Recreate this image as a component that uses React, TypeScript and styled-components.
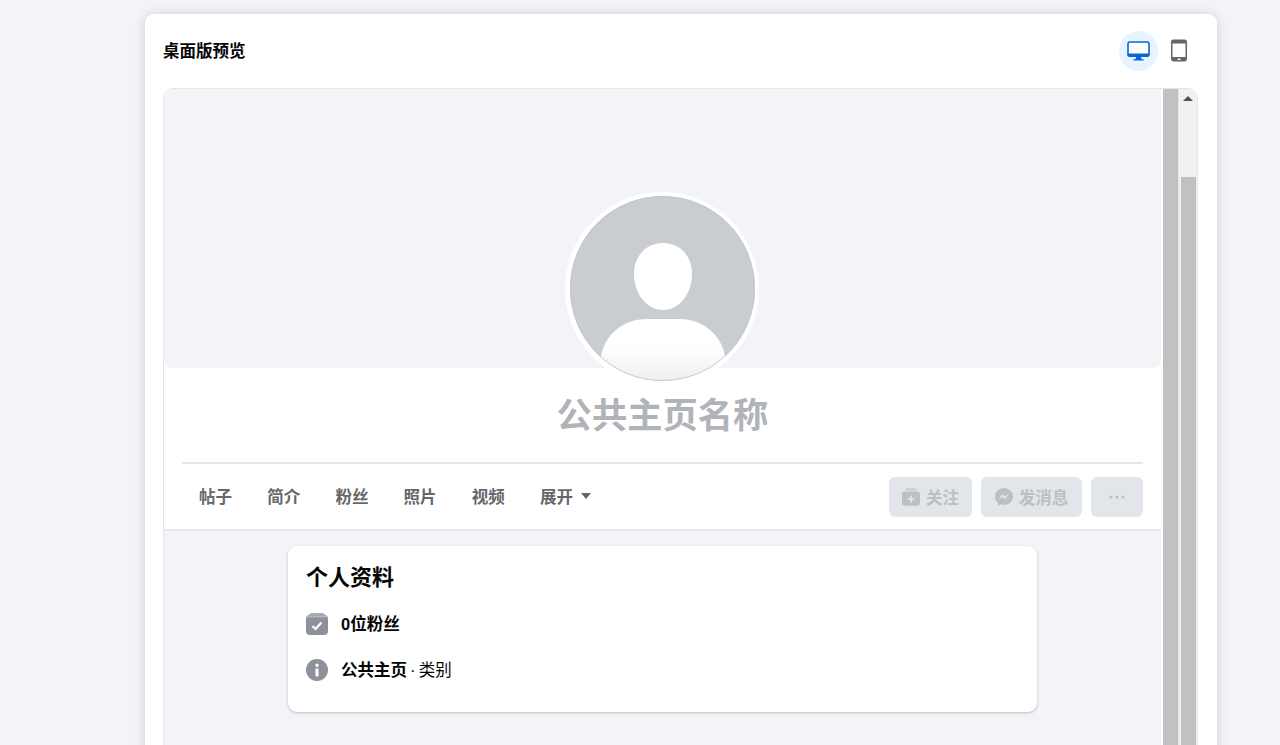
import React from "react";
import styled, { createGlobalStyle } from "styled-components";

const Global = createGlobalStyle`
  html, body { margin: 0; padding: 0; height: 745px; overflow: hidden; background: #f2f4f8; }
  #root { height: 745px; overflow: hidden; }
  * { box-sizing: border-box; }
  body { font-family: "Liberation Sans", "Noto Sans CJK SC", sans-serif; }
`;

const Page = styled.div`
  height: 745px;
  overflow: hidden;
  padding: 14px 63px 0 145px;
  background: #f2f4f8;
`;

const Card = styled.section`
  height: 800px;
  background: #fff;
  border-radius: 9px;
  box-shadow: 0 1px 12px rgba(0, 0, 0, 0.16);
  padding: 0 19px 0 18px;
`;

const Header = styled.header`
  height: 74px;
  display: flex;
  align-items: center;
  justify-content: space-between;
  padding: 0 0 1px 0;
`;

const Title = styled.h1`
  margin: 0 0 2px;
  font-size: 16.5px;
  font-weight: 700;
  color: #050505;
`;

const Toggle = styled.div`
  display: flex;
  align-items: center;
  gap: 1px;
`;

const ToggleButton = styled.div<{ $active?: boolean }>`
  width: 39px;
  height: 40px;
  border-radius: 50%;
  display: flex;
  align-items: center;
  justify-content: center;
  background: ${(p) => (p.$active ? "#e7f3ff" : "transparent")};
`;

const Frame = styled.div`
  height: 720px;
  display: flex;
  background: #fff;
  border: 1px solid #e4e6eb;
  border-radius: 10px;
  overflow: hidden;
`;

const Preview = styled.div`
  width: 997px;
  flex: none;
  height: 100%;
  background: #f2f4f8;
`;

const TopSection = styled.div`
  background: #fff;
`;

const Cover = styled.div`
  height: 279px;
  background: #f2f4f8;
  border-radius: 0 0 8px 8px;
`;

const ProfileHead = styled.div`
  border-bottom: 2px solid #e4e6eb;
  padding: 0 18px;
  height: 163px;
  display: flex;
  flex-direction: column;
  align-items: center;
`;

const AvatarRing = styled.div`
  margin: -176px 1px 0 0;
  width: 194px;
  height: 194px;
  flex: none;
  border-radius: 50%;
  background: #fff;
  padding: 4px 5px 5px 5px;
  position: relative;
`;

const Name = styled.h2`
  margin: 3px 0 0;
  height: 53px;
  line-height: 53px;
  font-size: 35.3px;
  font-weight: 700;
  color: #b0b3b8;
`;

const TabBar = styled.div`
  width: 100%;
  margin-top: 20px;
  border-top: 2px solid #e4e6eb;
  flex: 1;
  display: flex;
  align-items: center;
  justify-content: space-between;
  padding-left: 17px;
`;

const Tabs = styled.nav`
  display: flex;
  align-items: center;
  gap: 35.2px;
  margin-bottom: 2px;
`;

const Tab = styled.span`
  display: inline-flex;
  align-items: center;
  gap: 8px;
  font-size: 16.5px;
  font-weight: 700;
  color: #65676b;
`;

const Caret = styled.i`
  width: 0;
  height: 0;
  border-left: 5px solid transparent;
  border-right: 5px solid transparent;
  border-top: 6px solid #65676b;
  margin-top: 1px;
`;

const Actions = styled.div`
  display: flex;
  gap: 9px;
`;

const ActionButton = styled.div<{ $w: number }>`
  width: ${(p) => p.$w}px;
  height: 40px;
  border-radius: 6px;
  background: #e2e5e9;
  color: #bcc0c4;
  font-size: 16.5px;
  font-weight: 700;
  display: flex;
  align-items: center;
  justify-content: center;
  gap: 6px;
`;

const InfoCard = styled.div`
  width: 749px;
  height: 166px;
  margin: 15px 0 0 124px;
  background: #fff;
  border-radius: 9px;
  box-shadow: 0 1px 3px rgba(0, 0, 0, 0.22);
  padding: 16px 18px;
`;

const InfoTitle = styled.h3`
  margin: 0 0 18px;
  font-size: 22px;
  line-height: 32px;
  font-weight: 700;
  color: #050505;
`;

const InfoRow = styled.div`
  height: 22px;
  display: flex;
  align-items: center;
  gap: 13px;
  margin-bottom: 24px;
  font-size: 16.5px;
  color: #050505;
`;

const IconSlot = styled.span`
  display: flex;
  flex: none;
  margin-top: 2px;
`;

const Strong = styled.strong`
  font-weight: 700;
`;

const Rest = styled.span`
  font-weight: 400;
  word-spacing: -1.5px;
`;

const InnerBar = styled.div`
  flex: none;
  width: 15px;
  margin-left: 2px;
  height: 100%;
  background: #c1c1c1;
`;

const OuterBar = styled.div`
  flex: none;
  flex-grow: 1;
  height: 100%;
  background: #f1f1f1;
  border-left: 1px solid #e6e6e6;
  display: flex;
  flex-direction: column;
  align-items: flex-end;
`;

const ArrowSlot = styled.div`
  width: 100%;
  height: 88px;
  display: flex;
  justify-content: center;
  padding: 7px 1px 0 0;
`;

const UpArrow = styled.i`
  width: 0;
  height: 0;
  border-left: 5px solid transparent;
  border-right: 5px solid transparent;
  border-bottom: 5px solid #505050;
`;

const Thumb = styled.div`
  width: 15px;
  margin-right: 1px;
  flex: 1;
  background: #c1c1c1;
`;

const Monitor = () => (
  <svg width="23" height="20" viewBox="0 0 23 20">
    <rect x="1" y="1" width="21" height="14" rx="2" fill="#fff" stroke="#0866d9" strokeWidth="1.6" />
    <path d="M0.5 12.5h22v1.2a2.3 2.3 0 0 1-2.3 2.3H2.8a2.3 2.3 0 0 1-2.3-2.3z" fill="#0866d9" />
    <path d="M9 16h5l.6 2.2h2v1.2H6.4v-1.2h2z" fill="#0866d9" />
  </svg>
);

const Phone = () => (
  <svg width="16" height="23" viewBox="0 0 16 23">
    <rect x="0" y="0.5" width="16" height="22" rx="2.4" fill="#65676b" />
    <rect x="1.5" y="4.5" width="13" height="13.5" fill="#fff" />
    <rect x="6.5" y="19.4" width="3" height="1.6" rx="0.5" fill="#fff" />
  </svg>
);

const Silhouette = () => (
  <svg width="185" height="185" viewBox="0 0 185 185">
    <defs>
      <linearGradient id="body" x1="0" y1="0" x2="0" y2="1">
        <stop offset="0.45" stopColor="#ffffff" />
        <stop offset="1" stopColor="#eeeff1" />
      </linearGradient>
      <clipPath id="disc">
        <circle cx="92.5" cy="92.5" r="92.5" />
      </clipPath>
    </defs>
    <circle cx="92.5" cy="92.5" r="92.5" fill="#c9ccd1" />
    <g clipPath="url(#disc)">
      <path d="M93 47c17 0 29 13 29 31 0 20-13 36-29 36s-29-16-29-36c0-18 12-31 29-31z" fill="#fff" />
      <path d="M30 185v-15c0-29 22-47 47-47h32c25 0 47 18 47 47v15z" fill="url(#body)" />
    </g>
    <circle cx="92.5" cy="92.5" r="92" fill="none" stroke="#c2c5ca" strokeWidth="0.8" />
  </svg>
);

const FollowIcon = () => (
  <svg width="18" height="18" viewBox="0 0 18 18">
    <path d="M3.5 1.2c0-.6.5-1 1-1h9c.5 0 1 .4 1 1v1.3h-11z" fill="#c8cbd0" />
    <rect x="0" y="3.6" width="18" height="14.2" rx="3" fill="#bcc0c4" />
    <path d="M9 7.5v7M5.6 11h6.8" stroke="#e4e6eb" strokeWidth="1.7" />
  </svg>
);

const MessengerIcon = () => (
  <svg width="18" height="18" viewBox="0 0 18 18">
    <path d="M9 0C4 0 0 3.7 0 8.6c0 2.6 1.1 4.8 2.9 6.3v3l2.9-1.6c1 .3 2.1.5 3.2.5 5 0 9-3.7 9-8.4S14 0 9 0z" fill="#bcc0c4" />
    <path d="M3.6 11.2 7 6.3l2.7 2.2 3.9-2.2-3.4 4.9-2.7-2.2z" fill="#e4e6eb" />
  </svg>
);

const Dots = () => (
  <svg width="16" height="4" viewBox="0 0 16 4">
    <circle cx="2" cy="2" r="1.6" fill="#bcc0c4" />
    <circle cx="8" cy="2" r="1.6" fill="#bcc0c4" />
    <circle cx="14" cy="2" r="1.6" fill="#bcc0c4" />
  </svg>
);

const FansIcon = () => (
  <svg width="22" height="22" viewBox="0 0 22 22">
    <path d="M2.5 4C2.500 1.500 4 0 6 0h10c2 0 3.500 1.500 3.500 4z" fill="#a9adb6" />
    <rect x="0" y="2" width="22" height="20" rx="4" fill="#8c919c" />
    <rect x="1" y="2.500" width="20" height="2" rx="1" fill="#b4b8c0" />
    <path d="M6.500 13l3 3 6-6.500" fill="none" stroke="#fff" strokeWidth="2.200" />
  </svg>
);

const InfoIcon = () => (
  <svg width="22" height="22" viewBox="0 0 22 22">
    <circle cx="11" cy="11" r="11" fill="#8c919c" />
    <circle cx="11" cy="6.300" r="1.700" fill="#fff" />
    <rect x="9.500" y="9.500" width="3" height="8" rx="0.700" fill="#fff" />
  </svg>
);

export default function App() {
  return (
    <Page>
      <Global />
      <Card>
        <Header>
          <Title>桌面版预览</Title>
          <Toggle>
            <ToggleButton $active>
              <Monitor />
            </ToggleButton>
            <ToggleButton>
              <Phone />
            </ToggleButton>
          </Toggle>
        </Header>
        <Frame>
          <Preview>
            <TopSection>
              <Cover />
              <ProfileHead>
                <AvatarRing>
                  <Silhouette />
                </AvatarRing>
                <Name>公共主页名称</Name>
                <TabBar>
                  <Tabs>
                    <Tab>帖子</Tab>
                    <Tab>简介</Tab>
                    <Tab>粉丝</Tab>
                    <Tab>照片</Tab>
                    <Tab>视频</Tab>
                    <Tab>
                      展开
                      <Caret />
                    </Tab>
                  </Tabs>
                  <Actions>
                    <ActionButton $w={83}>
                      <FollowIcon />
                      关注
                    </ActionButton>
                    <ActionButton $w={101}>
                      <MessengerIcon />
                      发消息
                    </ActionButton>
                    <ActionButton $w={52}>
                      <Dots />
                    </ActionButton>
                  </Actions>
                </TabBar>
              </ProfileHead>
            </TopSection>
            <InfoCard>
              <InfoTitle>个人资料</InfoTitle>
              <InfoRow>
                <IconSlot>
                  <FansIcon />
                </IconSlot>
                <Strong>0位粉丝</Strong>
              </InfoRow>
              <InfoRow>
                <IconSlot>
                  <InfoIcon />
                </IconSlot>
                <span>
                  <Strong>公共主页</Strong>
                  <Rest> · 类别</Rest>
                </span>
              </InfoRow>
            </InfoCard>
          </Preview>
          <InnerBar />
          <OuterBar>
            <ArrowSlot>
              <UpArrow />
            </ArrowSlot>
            <Thumb />
          </OuterBar>
        </Frame>
      </Card>
    </Page>
  );
}
